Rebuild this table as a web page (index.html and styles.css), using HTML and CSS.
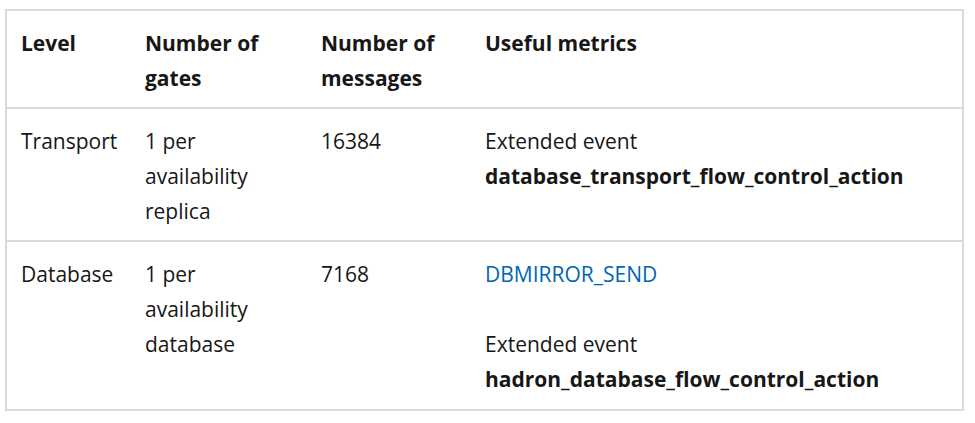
FILE: index.html
```html
<!DOCTYPE html>
<html lang="en">
<head>
<meta charset="utf-8">
<title>Flow control gates</title>
<link rel="stylesheet" href="styles.css">
</head>
<body>
<div class="wrap">
<table class="gates">
  <colgroup>
    <col class="c1"><col class="c2"><col class="c3"><col class="c4">
  </colgroup>
  <thead>
    <tr>
      <th>Level</th>
      <th>Number of gates</th>
      <th>Number of messages</th>
      <th>Useful metrics</th>
    </tr>
  </thead>
  <tbody>
    <tr>
      <td>Transport</td>
      <td>1 per availability replica</td>
      <td>16384</td>
      <td><p>Extended event <strong>database_transport_flow_control_action</strong></p></td>
    </tr>
    <tr class="last">
      <td>Database</td>
      <td>1 per availability database</td>
      <td>7168</td>
      <td>
        <p><a href="#">DBMIRROR_SEND</a></p>
        <p>Extended event <strong>hadron_database_flow_control_action</strong></p>
      </td>
    </tr>
  </tbody>
</table>
</div>
</body>
</html>
```

FILE: styles.css
```css
html, body {
  margin: 0;
  padding: 0;
  background: #ffffff;
}
.wrap {
  padding: 9px 11px 0 5px;
}
.gates {
  width: 959px;
  table-layout: fixed;
  border-collapse: collapse;
  border: 2px solid #dadada;
  font-family: "Segoe UI", "Open Sans", sans-serif;
  font-size: 21px;
  line-height: 35px;
  color: #171717;
}
.c1 { width: 125px; }
.c2 { width: 176px; }
.c3 { width: 164px; }
.gates th, .gates td {
  text-align: left;
  vertical-align: top;
  padding: 15px 14px 11px 14px;
}
.gates .last td {
  padding-bottom: 12px;
}
.gates th {
  font-weight: 700;
}
.gates tr {
  border-bottom: 2px solid #dadada;
}
.gates p {
  margin: 0;
}
.gates p + p {
  margin-top: 35px;
}
.gates strong {
  font-weight: 700;
}
.gates a {
  color: #0065b3;
  text-decoration: none;
}
```
